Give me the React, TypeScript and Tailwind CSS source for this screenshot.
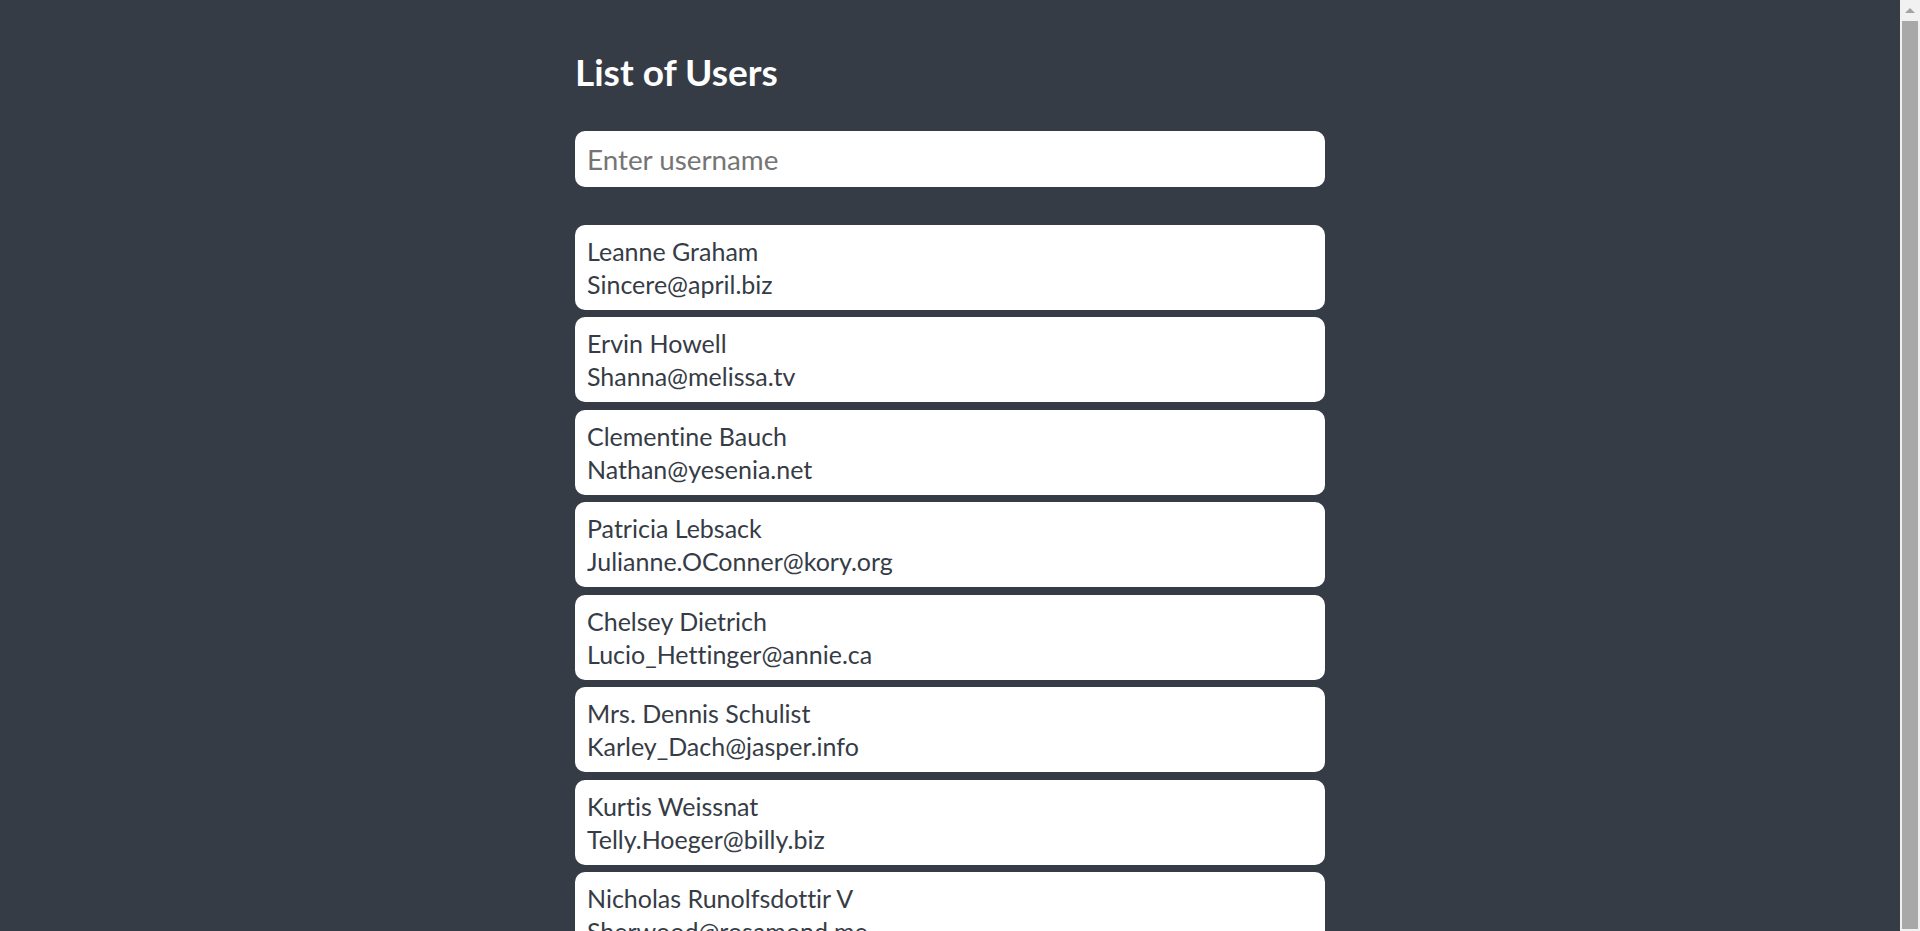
import { useState } from 'react';

interface User {
  id: number;
  name: string;
  email: string;
}

const users: User[] = [
  { id: 1, name: 'Leanne Graham', email: 'Sincere@april.biz' },
  { id: 2, name: 'Ervin Howell', email: 'Shanna@melissa.tv' },
  { id: 3, name: 'Clementine Bauch', email: 'Nathan@yesenia.net' },
  { id: 4, name: 'Patricia Lebsack', email: 'Julianne.OConner@kory.org' },
  { id: 5, name: 'Chelsey Dietrich', email: 'Lucio_Hettinger@annie.ca' },
  { id: 6, name: 'Mrs. Dennis Schulist', email: 'Karley_Dach@jasper.info' },
  { id: 7, name: 'Kurtis Weissnat', email: 'Telly.Hoeger@billy.biz' },
  { id: 8, name: 'Nicholas Runolfsdottir V', email: 'Sherwood@rosamond.me' },
  { id: 9, name: 'Glenna Reichert', email: 'Chaim_McDermott@dana.io' },
  { id: 10, name: 'Clementina DuBuque', email: 'Rey.Padberg@karina.biz' },
];

export default function App() {
  const [query, setQuery] = useState('');

  const filtered = users.filter(u => u.name.toLowerCase().includes(query.toLowerCase()));

  return (
    <div className="h-screen flex bg-[#363c46] font-['Lato',sans-serif] text-[#363c46] [font-variant-ligatures:none]">
      <div className="flex-1 overflow-hidden">
        <div className="w-[750px] mx-auto pt-[49.5px] pb-10">
          <h1 className="text-[37px] leading-[1.2] font-bold text-white">List of Users</h1>

          <input
            type="text"
            value={query}
            onChange={e => setQuery(e.target.value)}
            placeholder="Enter username"
            className="mt-[37.5px] w-full h-14 px-3 rounded-[10px] bg-white text-[27.8px] outline-none placeholder:text-[#757575] [font-variant-ligatures:none]"
          />

          {/* Users */}
          <ul className="mt-[37.5px] flex flex-col gap-[7.5px]">
            {filtered.map(user => (
              <li key={user.id} className="bg-white rounded-[10px] px-3 pt-[10px] pb-[9px] text-[25px] leading-[33px]">
                <div>{user.name}</div>
                <div>{user.email}</div>
              </li>
            ))}
          </ul>
        </div>
      </div>

      {/* scrollbar */}
      <div className="w-5 shrink-0 bg-[#f1f1f1] flex flex-col items-center pb-[2px]">
        <div className="h-[21px] w-full flex items-center justify-center">
          <div className="w-0 h-0 border-l-[5px] border-r-[5px] border-b-[5px] border-l-transparent border-r-transparent border-b-[#a3a3a3]" />
        </div>
        <div className="flex-1 w-4 bg-[#a8a8a8]" />
      </div>
    </div>
  );
}
